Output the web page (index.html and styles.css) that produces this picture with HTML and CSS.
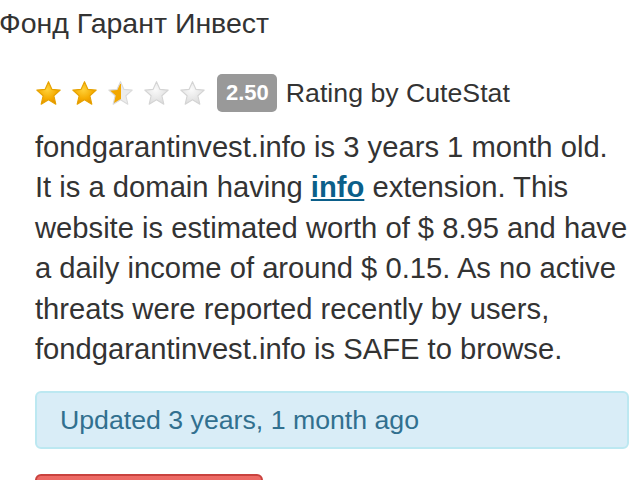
FILE: index.html
```html
<!DOCTYPE html>
<html lang="ru">
<head>
    <meta charset="UTF-8">
    <title>Фонд Гарант Инвест</title>
    <link rel="stylesheet" href="styles.css">
</head>
<body>
    <h1 class="site-title">Фонд Гарант Инвест</h1>

    <div class="site-info">
        <svg width="0" height="0" class="defs">
            <defs>
                <radialGradient id="gold" cx="0.45" cy="0.35" r="0.7">
                    <stop offset="0" stop-color="#ffd23a"/>
                    <stop offset="0.6" stop-color="#f5ab00"/>
                    <stop offset="1" stop-color="#e08a00"/>
                </radialGradient>
                <radialGradient id="grey" cx="0.45" cy="0.35" r="0.7">
                    <stop offset="0" stop-color="#fafafa"/>
                    <stop offset="1" stop-color="#dadada"/>
                </radialGradient>
                <linearGradient id="half" x1="0" y1="0" x2="1" y2="0">
                    <stop offset="0.5" stop-color="#f2a700"/>
                    <stop offset="0.5" stop-color="#ececec"/>
                </linearGradient>
                <path id="star" d="M12 1.5 L15 8.3 L22.4 9 L16.8 14 L18.5 21.5 L12 17.6 L5.5 21.5 L7.2 14 L1.6 9 L9 8.3 Z" stroke-linejoin="round"/>
            </defs>
        </svg>

        <div class="rating">
            <div class="stars">
                <svg class="star" viewBox="0 0 24 24"><use href="#star" fill="url(#gold)" stroke="#e6a200" stroke-width="1"/></svg>
                <svg class="star" viewBox="0 0 24 24"><use href="#star" fill="url(#gold)" stroke="#e6a200" stroke-width="1"/></svg>
                <svg class="star" viewBox="0 0 24 24"><use href="#star" fill="url(#half)" stroke="#dadada" stroke-width="1"/></svg>
                <svg class="star" viewBox="0 0 24 24"><use href="#star" fill="url(#grey)" stroke="#d4d4d4" stroke-width="1"/></svg>
                <svg class="star" viewBox="0 0 24 24"><use href="#star" fill="url(#grey)" stroke="#d4d4d4" stroke-width="1"/></svg>
            </div>
            <span class="label">2.50</span>
            <span class="rating-text">Rating by CuteStat</span>
        </div>

        <p class="summary">fondgarantinvest.info is 3 years 1 month old. It is a domain having <a href="#">info</a> extension. This website is estimated worth of $ 8.95 and have a daily income of around $ 0.15. As no active threats were reported recently by users, fondgarantinvest.info is SAFE to browse.</p>

        <div class="alert-info">Updated 3 years, 1 month ago</div>

        <button type="button" class="btn-danger">Update Stat</button>
    </div>
</body>
</html>
```

FILE: styles.css
```css
body {
    margin: 0;
    font-family: "Liberation Sans", Arial, sans-serif;
    color: #333;
    background: #fff;
    overflow: hidden;
}

.site-title {
    margin: 0 0 0 -1px;
    padding: 6px 0 0 0;
    font-size: 28.5px;
    font-weight: normal;
    line-height: 34px;
    color: #333;
}

.defs {
    position: absolute;
}

.site-info {
    padding: 0 6px 0 35px;
}

.rating {
    display: flex;
    align-items: center;
    margin-top: 33px;
    height: 40px;
}

.stars {
    display: flex;
    gap: 9px;
    margin-right: 11px;
}

.star {
    width: 27px;
    height: 27px;
}

.label {
    background: #999;
    color: #fff;
    font-weight: bold;
    font-size: 22px;
    line-height: 26px;
    padding: 6px 8px 6px 9px;
    border-radius: 5px;
    margin-right: 9px;
}

.rating-text {
    font-size: 26.7px;
}

.summary {
    max-width: 593px;
    margin: 14px 0 0 0;
    font-size: 29.2px;
    line-height: 40.4px;
}

.summary a {
    color: #0b5f8a;
    font-weight: bold;
    text-decoration: underline;
}

.alert-info {
    margin-top: 22px;
    background: #d9edf7;
    border: 2px solid #bce8f1;
    border-radius: 6px;
    color: #31708f;
    font-size: 26.7px;
    line-height: 30px;
    padding: 12px 23px;
}

.btn-danger {
    margin-top: 25px;
    width: 228px;
    height: 50px;
    background: linear-gradient(#ee6b66, #d9534f);
    border: 2px solid #c9423e;
    border-radius: 6px;
    color: #fff;
    font-family: "Liberation Sans", Arial, sans-serif;
    font-size: 26px;
}
```
